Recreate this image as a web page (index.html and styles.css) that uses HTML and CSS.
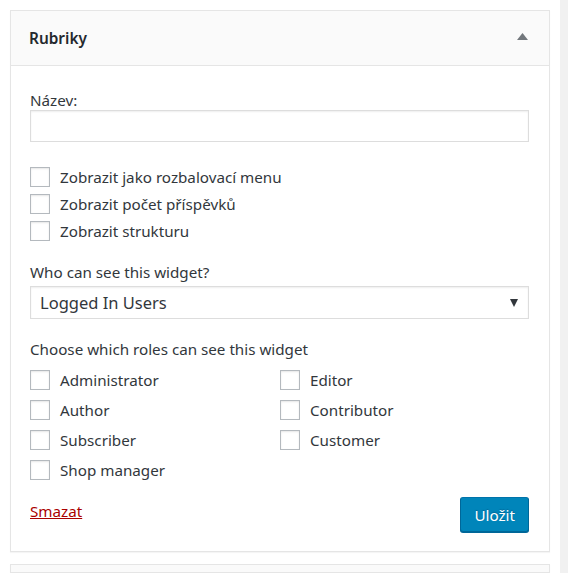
FILE: index.html
```html
<!DOCTYPE html>
<html lang="cs">
<head>
<meta charset="utf-8">
<title>Rubriky</title>
<link rel="stylesheet" href="styles.css">
</head>
<body>
<div class="page">
  <div class="col">
    <div class="card">
      <div class="card-head">
        <h3 class="card-title">Rubriky</h3>
        <svg class="toggle" width="11" height="7" viewBox="0 0 11 7"><path d="M5.5 0 L11 7 L0 7 Z" fill="#72777c"/></svg>
      </div>
      <div class="card-body">
        <label class="label">Název:</label>
        <div class="input"></div>
        <div class="checks">
          <div class="check"><span class="box"></span><span>Zobrazit jako rozbalovací menu</span></div>
          <div class="check"><span class="box"></span><span>Zobrazit počet příspěvků</span></div>
          <div class="check"><span class="box"></span><span>Zobrazit strukturu</span></div>
        </div>
        <label class="label who">Who can see this widget?</label>
        <div class="select"><span>Logged In Users</span><svg width="8" height="8" viewBox="0 0 8 8"><path d="M0 0 L8 0 L4 8 Z" fill="#32373c"/></svg></div>
        <label class="label roles-label">Choose which roles can see this widget</label>
        <div class="roles">
          <div class="check role"><span class="box"></span><span>Administrator</span></div>
          <div class="check role"><span class="box"></span><span>Editor</span></div>
          <div class="check role"><span class="box"></span><span>Author</span></div>
          <div class="check role"><span class="box"></span><span>Contributor</span></div>
          <div class="check role"><span class="box"></span><span>Subscriber</span></div>
          <div class="check role"><span class="box"></span><span>Customer</span></div>
          <div class="check role"><span class="box"></span><span>Shop manager</span></div>
        </div>
        <div class="footer">
          <a class="delete" href="#">Smazat</a>
          <button class="save">Uložit</button>
        </div>
      </div>
    </div>
    <div class="card card-next"></div>
  </div>
  <div class="strip"></div>
</div>
</body>
</html>
```
FILE: styles.css
```css
html, body {
  margin: 0;
  padding: 0;
  background: #fff;
}
body {
  font-family: "Noto Sans", "Open Sans", "Liberation Sans", sans-serif;
  font-size: 15.2px;
  color: #32373c;
  height: 573px;
  overflow: hidden;
}
.page {
  display: flex;
  height: 573px;
}
.col {
  width: 560px;
  box-sizing: border-box;
  padding: 10px 10px 0 10px;
  display: flex;
  flex-direction: column;
  gap: 12px;
}
.strip {
  width: 8px;
  background: #f1f1f1;
}
.card {
  border: 1px solid #e5e5e5;
  background: #fff;
  box-shadow: 0 1px 1px rgba(0,0,0,0.04);
}
.card-head {
  height: 54px;
  background: #fafafa;
  border-bottom: 1px solid #e5e5e5;
  display: flex;
  align-items: center;
  justify-content: space-between;
  padding: 0 21px 0 18px;
}
.card-title {
  margin: 0;
  font-size: 15.4px;
  font-weight: 600;
  color: #23282d;
}
.toggle {
  margin-top: -4px;
}
.card-body {
  padding: 24px 20px 19px 19px;
  display: flex;
  flex-direction: column;
}
.label {
  display: block;
  line-height: 20px;
}
.input {
  height: 32px;
  box-sizing: border-box;
  border: 1px solid #ddd;
  box-shadow: inset 0 1px 2px rgba(0,0,0,0.07);
  background: #fff;
}
.checks {
  margin-top: 21px;
  display: flex;
  flex-direction: column;
}
.check {
  height: 27px;
  display: flex;
  align-items: center;
  gap: 10px;
}
.box {
  width: 20px;
  height: 20px;
  box-sizing: border-box;
  border: 1px solid #b4b9be;
  background: #fff;
  box-shadow: inset 0 1px 2px rgba(0,0,0,0.1);
  flex: none;
}
.who {
  margin-top: 18px;
}
.select {
  margin-top: 4px;
  height: 33px;
  box-sizing: border-box;
  border: 1px solid #ddd;
  box-shadow: inset 0 1px 2px rgba(0,0,0,0.07);
  display: flex;
  align-items: center;
  justify-content: space-between;
  padding: 0 10px 0 9px;
  font-size: 16.5px;
  color: #32373c;
}
.roles-label {
  margin-top: 20px;
}
.roles {
  margin-top: 6px;
  display: grid;
  grid-template-columns: 250px 1fr;
}
.role {
  height: 30px;
}
.footer {
  margin-top: 13px;
  display: flex;
  justify-content: space-between;
  align-items: flex-start;
}
.delete {
  color: #a00;
  text-decoration: underline;
  line-height: 20px;
  margin-top: 3px;
}
.save {
  font-family: inherit;
  font-size: 15.2px;
  color: #fff;
  background: #0085ba;
  border: 1px solid;
  border-color: #0073aa #006799 #006799;
  border-radius: 3px;
  box-shadow: 0 1px 0 #006799;
  height: 35px;
  padding: 0 13px;
  text-shadow: 0 -1px 1px #006799;
  margin-top: -1px;
}
.card-next {
  background: #fafafa;
  height: 40px;
}
```
